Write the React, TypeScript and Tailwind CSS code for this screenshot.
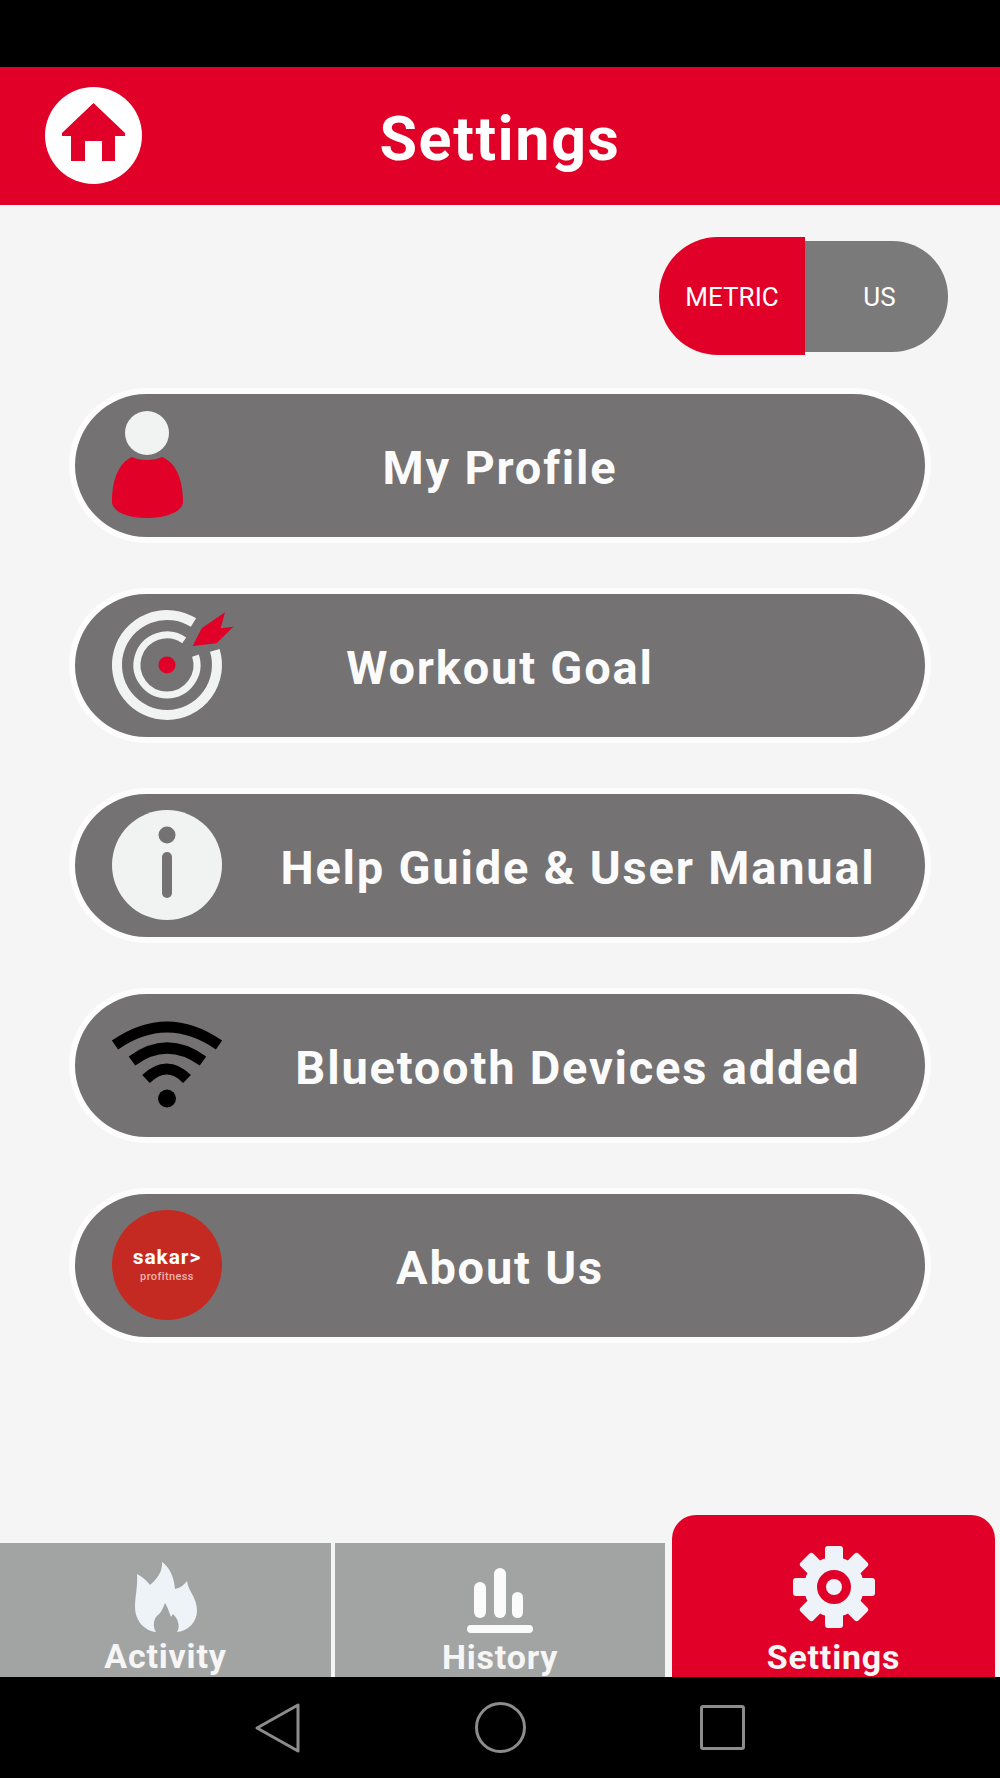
const ROWS = [
  { label: "My Profile", icon: "person", offset: "" },
  { label: "Workout Goal", icon: "target", offset: "" },
  { label: "Help Guide & User Manual", icon: "info", offset: "pl-[156px]" },
  { label: "Bluetooth Devices added", icon: "wifi", offset: "pl-[156px]" },
  { label: "About Us", icon: "logo", offset: "" },
];

function RowIcon({ name }: { name: string }) {
  if (name === "logo") {
    return (
      <div className="flex h-[110px] w-[110px] flex-col items-center justify-center rounded-full bg-[#c42a22] pb-[2px]">
        <span className="text-[21px] font-bold leading-[25px] tracking-[0.9px] text-white">sakar&gt;</span>
        <span className="text-[11px] font-medium leading-[13px] tracking-[0.4px] text-[#efb5ae]">profitness</span>
      </div>
    );
  }
  return (
    <svg width="110" height="110" viewBox="0 0 110 110" fill="none" className="overflow-visible">
      {name === "person" && (
        <>
          <circle cx="35" cy="23" r="22" fill="#f1f2f2" />
          <path
            d="M20 47 C27 51 43 51 50 47 C63 52 71 68 71 92 C71 100 58 108 35 108 C12 108 0 100 0 92 C0 68 8 52 20 47Z"
            fill="#e00028"
          />
        </>
      )}
      {name === "target" && (
        <>
          <path d="M102.8 40.4 A50 50 0 1 1 81.5 12.6" stroke="#f1f2f2" strokeWidth="10" />
          <path d="M83.5 45.7 A30 30 0 1 1 72.2 30.4" stroke="#f1f2f2" strokeWidth="7" />
          <circle cx="55" cy="55" r="8.5" fill="#e00028" />
          <path d="M80.7 36 L89.7 18.3 L113 2.3 L108.7 18.3 L121.3 16.7 L104.7 33.3Z" fill="#e00028" />
        </>
      )}
      {name === "info" && (
        <>
          <circle cx="55" cy="55" r="55" fill="#f1f2f2" />
          <circle cx="55" cy="25" r="8.5" fill="#747273" />
          <rect x="50" y="42" width="10" height="46" rx="5" fill="#747273" />
        </>
      )}
      {name === "wifi" && (
        <>
          <path d="M3 35 Q55 -1 107 35" stroke="#000" strokeWidth="11" />
          <path d="M20 51 Q55 25 91 51" stroke="#000" strokeWidth="11" />
          <path d="M34 69 Q55 49 75 69" stroke="#000" strokeWidth="11" />
          <circle cx="55" cy="88.5" r="9" fill="#000" />
        </>
      )}
    </svg>
  );
}

function Gear() {
  return (
    <svg width="84" height="84" viewBox="0 0 84 84">
      {[0, 45, 90, 135, 180, 225, 270, 315].map((deg) => (
        <rect key={deg} x="33" y="1" width="18" height="20" rx="3" fill="#edf3f8" transform={`rotate(${deg} 42 42)`} />
      ))}
      <circle cx="42" cy="42" r="30" fill="#edf3f8" />
      <circle cx="42" cy="42" r="17" fill="#e00028" />
      <circle cx="42" cy="42" r="8" fill="#edf3f8" />
    </svg>
  );
}

export default function App() {
  return (
    <div className="flex h-[1778px] w-[1000px] flex-col overflow-hidden bg-[#f5f5f5] font-['Roboto',sans-serif]">
      <div className="h-[67px] bg-black" />

      <header className="relative flex h-[138px] items-center justify-center bg-[#e00028] pt-[7px]">
        <div className="absolute left-[45px] top-[20px] h-[97px] w-[97px] rounded-full bg-white">
          <svg width="97" height="97" viewBox="0 0 97 97">
            <path d="M48.5 16 L80 46 V49 H70 V74 H57 V54 H40 V74 H26 V49 H17 V46Z" fill="#e00028" />
          </svg>
        </div>
        <h1 className="text-[61px] font-bold leading-none tracking-[1.6px] text-white">Settings</h1>
      </header>

      <main className="flex-1">
        <div className="flex items-center justify-end pr-[52px] pt-[32px] text-[26px] text-white">
          <div className="flex h-[118px] w-[146px] items-center justify-center rounded-l-[59px] bg-[#e00028] pt-[2px]">METRIC</div>
          <div className="flex h-[111px] w-[143px] items-center justify-center rounded-r-[56px] bg-[#7b7a7b] pl-[6px] pt-[2px]">US</div>
        </div>

        <div className="mt-[39px] flex flex-col gap-[57px] px-[75px]">
          {ROWS.map((row) => (
            <div
              key={row.label}
              className={`relative flex h-[143px] items-center justify-center rounded-full bg-[#747273] pt-[6px] shadow-[0_0_0_6px_#fdfdfd] ${row.offset}`}
            >
              <div className="absolute left-[37px] top-[16px]">
                <RowIcon name={row.icon} />
              </div>
              <span className="text-[47px] font-bold tracking-[1.8px] text-[#fbfbfb]">{row.label}</span>
            </div>
          ))}
        </div>
      </main>

      <nav className="flex h-[162px] items-end gap-[4px] pr-[5px] text-[34px] font-bold leading-none tracking-[0.8px] text-[#f6f6f6]">
        <div className="flex h-[134px] w-[331px] flex-col items-center bg-[#a2a4a3] pt-[18px]">
          <svg width="62" height="72" viewBox="0 0 62 72" fill="#eef3f8">
            <path d="M27 1 C34 6 39 15 40 28 C45 27 49 24 52 20 C53 30 62 36 62 50 C62 60 54 70 42 71 C46 64 42 57 38 53 L36 56 C34 51 33 47 30 42 C28 47 26 52 23 54 C19 57 17 65 21 71 C10 70 0 60 0 46 C0 35 3 25 2 13 C8 16 12 20 15 24 C22 18 28 10 27 1Z" />
          </svg>
          <span className="mt-[6px]">Activity</span>
        </div>
        <div className="flex h-[134px] w-[330px] flex-col items-center bg-[#a2a4a3] pt-[25px]">
          <svg width="66" height="65" viewBox="0 0 66 65" fill="#fbfbfb">
            <rect x="7" y="14" width="12" height="36" rx="6" />
            <rect x="27" y="0" width="12" height="50" rx="6" />
            <rect x="45" y="24" width="11" height="26" rx="5.5" />
            <rect x="0" y="57" width="66" height="8" rx="4" />
          </svg>
          <span className="mt-[7px]">History</span>
        </div>
        <div className="ml-[3px] flex h-[162px] w-[323px] flex-col items-center rounded-t-[24px] bg-[#e00028] pt-[30px]">
          <Gear />
          <span className="mt-[11px]">Settings</span>
        </div>
      </nav>

      <footer className="flex h-[101px] items-center justify-center bg-black">
        <div className="flex w-[222px] justify-center">
          <svg width="48" height="52" viewBox="0 0 48 52" fill="none">
            <path d="M3 26 L44 3 V49Z" stroke="#8c8c8c" strokeWidth="3" strokeLinejoin="round" />
          </svg>
        </div>
        <div className="flex w-[222px] justify-center">
          <div className="h-[51px] w-[51px] rounded-full border-[3px] border-[#8c8c8c]" />
        </div>
        <div className="flex w-[222px] justify-center">
          <div className="h-[45px] w-[45px] rounded-[3px] border-[3px] border-[#8c8c8c]" />
        </div>
      </footer>
    </div>
  );
}
